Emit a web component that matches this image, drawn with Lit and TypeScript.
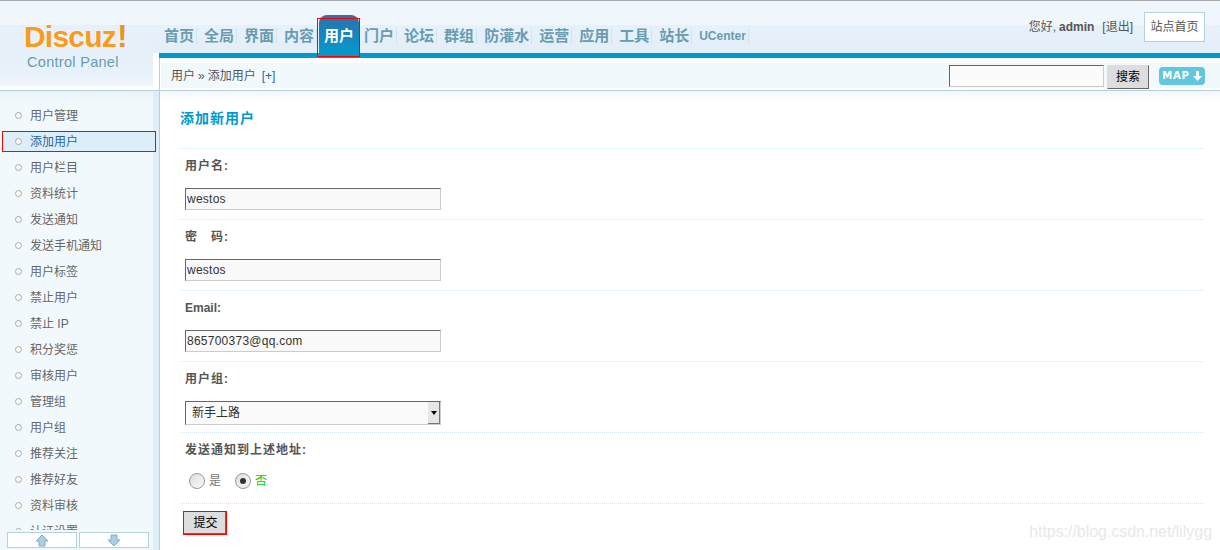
import { LitElement, html, css } from "lit";
import { customElement } from "lit/decorators.js";

const NAV = ["首页","全局","界面","内容","用户","门户","论坛","群组","防灌水","运营","应用","工具","站长","UCenter"];
const MENU = ["用户管理","添加用户","用户栏目","资料统计","发送通知","发送手机通知","用户标签","禁止用户","禁止 IP","积分奖惩","审核用户","管理组","用户组","推荐关注","推荐好友","资料审核","认证设置"];
const FONT = css`"Liberation Sans", "Noto Sans CJK SC", sans-serif`;
const BAND = css`linear-gradient(#f0f6fd 0, #eff6fc 24px, #e7f1fa 24px, #e2eef8 52px)`;

@customElement("app-root")
export class AppRoot extends LitElement {
  static styles = css`
    :host { display: block; width: 1220px; height: 550px; overflow: hidden; position: relative; background: #fff;
      font: 12px/16px ${FONT}; color: #555; }
    * { box-sizing: border-box; }
    .top { height: 91px; border-top: 1px solid #a9a9a9; display: grid; grid-template-columns: 153px 1fr; background: #fff; }
    .logocol { height: 90px; border-bottom: 1px solid #b5d0dc; }
    .logo { height: 85px; padding: 17px 0 0 24px; display: flex; flex-direction: column;
      background: linear-gradient(#f0f6fd 0, #eff6fc 24px, #e6f0f9 24px, #e7f1f9 70px, #eff6fb 85px); }
    .dz { font: bold 30px/36px ${FONT}; letter-spacing: -.8px; color: #fb9a1c; text-shadow: 0 0 2px #fff; }
    .dz b { color: #e5981f; font-size: 32px; letter-spacing: 0; margin-left: 1px; }
    .cp { font: 14.5px/18px ${FONT}; color: #6a9cb0; margin: -2px 0 0 3px; letter-spacing: .3px; }
    .right { display: flex; flex-direction: column; position: relative; }
    .navrow { height: 52px; display: flex; align-items: flex-start; padding-left: 6px; background: ${BAND}; }
    .nav { display: flex; padding-top: 14px; height: 52px; position: relative; z-index: 2; }
    .nav a { height: 38px; padding: 4px 5px 0; display: flex; align-items: center; position: relative;
      font: bold 15px/20px ${FONT}; color: #6a9cb0; }
    .nav a::after { content: ""; position: absolute; right: 2px; top: 13px; height: 16px; width: 1px; background: #d3e3ec; }
    .nav a.active { color: #fff; background: linear-gradient(#2a71ad, #0699cc); border-radius: 8px 8px 0 0; }
    .nav a.active::after { display: none; }
    .nav a.active::before { content: ""; position: absolute; left: -2px; right: -1px; top: 3px; bottom: -4px; border: 1px solid #f00; }
    .nav a.sm { font-size: 12px; }
    .user { margin-left: auto; margin-right: 15px; display: flex; align-items: center; margin-top: 11px; height: 30px; }
    .user b { margin-left: 3px; }
    .user .out { margin-left: 8px; }
    .home { margin-left: 11px; width: 61px; height: 30px; border: 1px solid #b6d0dc; background: #fff; display: flex; align-items: center; justify-content: center; }
    .bar { height: 5px; background: #0099cc; margin-left: 6px; }
    .crumbwrap { background: #fff; padding: 5px 0 2px 1px; height: 33px; margin-left: 6px; border-left: 1px solid #b5d0dc; border-bottom: 1px solid #b5d0dc; position: relative; }
    .crumbwrap::after { content: ""; position: absolute; left: -7px; bottom: -1px; width: 6px; height: 1px; background: #b5d0dc; }
    .crumb { height: 25px; background: #f2f9fd; display: flex; align-items: center; padding: 0 15px 0 10px; }
    .crumb .sep { margin: 0 3px; }
    .crumb .plus { color: #2366a8; margin-left: 6px; }
    .search { margin-left: auto; display: flex; align-items: flex-start; padding-top: 2px; }
    .search input { width: 155px; height: 22px; border: 1px solid; border-color: #666 #ccc #ccc #666; background: #fbfbfb; padding: 0 2px; margin: 0; outline: none; }
    .btn { font: 12px/16px ${FONT}; color: #000; background: #ddd; border: 1px solid; border-color: #ddd #666 #666 #ddd; padding: 0; margin: 0; }
    .search .btn { width: 42px; height: 24px; margin-left: 3px; }
    .map { margin-left: 10px; margin-top: 2px; width: 46px; height: 18px; border-radius: 4px; background: #62c6dc; color: #fff; display: flex; align-items: center; justify-content: center; gap: 3px;
      font: bold 10px/18px "DejaVu Sans", sans-serif; letter-spacing: .8px; }
    .map svg { display: block; }
    .body { height: 459px; display: grid; grid-template-columns: 153px 6px 1fr; }
    .left { position: relative; z-index: 2; display: flex; flex-direction: column; background: #f2f9fd; height: 459px; }
    .fade { height: 12px; flex: none; background: linear-gradient(#eaf3f9, #f2f9fd); }
    .menu { height: 427px; overflow-x: visible; overflow-y: clip; flex: none; }
    .menu a { display: flex; align-items: center; height: 26px; padding-left: 15px; color: #666; position: relative; }
    .menu a i { width: 7px; height: 7px; border-radius: 50%; border: 1px solid #aaa; background: #fafafa; margin: -2px 8px 0 0; flex: none; position: relative; }
    .menu a.on { color: #2366a8; }
    .menu a.on::before { content: ""; box-sizing: border-box; position: absolute; left: 2px; width: 154px; top: 2px; bottom: 3px; background: #deeef9; border: 1px solid #f00; }
    .menu a span { position: relative; }
    .scroll { display: flex; gap: 2px; padding: 2px 0 0 7px; background: #f2f9fd; height: 20px; flex: none; }
    .scroll div { width: 70px; height: 16px; border: 1px solid #b6d0dc; background: #fff; display: flex; align-items: center; justify-content: center; }
    .strip { background: #deeef8; }
    .main { border-left: 1px solid #b5d0dc; padding: 0 17px 0 20px; background: linear-gradient(#f3f8fb 0, #fff 12px, #fff 100%); }
    h1 { margin: 0; height: 57px; padding-top: 18px; font: bold 14px/18px ${FONT}; color: #0099cc; letter-spacing: 1px; }
    .row { height: 71px; border-top: 1px dotted #cfe6f3; padding: 9px 0 0 5px; }
    label { display: block; font-weight: bold; color: #555; height: 16px; line-height: 16px; letter-spacing: 1px; }
    label.latin { letter-spacing: 0; }
    .field { width: 256px; height: 22px; margin: 14px 0 0; display: block; border: 1px solid; border-color: #666 #ccc #ccc #666; background: #f9f9f9;
      font: 12px/20px ${FONT}; letter-spacing: .25px; color: #333; padding: 0 1px; outline: none; }
    .selwrap { position: relative; width: 256px; height: 24px; margin-top: 14px; }
    select { appearance: none; width: 256px; height: 24px; display: block; border: 1px solid; border-color: #666 #ccc #ccc #666; background: #fafafa; padding: 0 6px; margin: 0;
      font: 12px/20px ${FONT}; color: #333; outline: none; border-radius: 0; }
    .arrow { position: absolute; right: 1px; top: 1px; bottom: 1px; width: 12px; background: #e6e6e6; border-right: 1px solid #777; border-bottom: 1px solid #777; display: flex; align-items: center; justify-content: center; }
    .arrow::after { content: ""; border: 3px solid transparent; border-top: 4px solid #000; border-bottom: 0; }
    .radios { display: flex; align-items: center; height: 16px; margin-top: 15px; padding-left: 4px; }
    .radio { width: 16px; height: 16px; border-radius: 50%; border: 1px solid #999; background: linear-gradient(135deg, #dcdcdc, #fafafa); display: flex; align-items: center; justify-content: center; flex: none; }
    .radio.on::after { content: ""; width: 6px; height: 6px; border-radius: 50%; background: #333; }
    .radios span { margin-left: 4px; color: #777; }
    .radios span.no { color: #00d000; }
    .radios span.yes { margin-right: 14px; }
    .actions { border-top: 1px dotted #cfe6f3; padding: 7px 0 0 3px; }
    .submit { display: block; width: 44px; height: 24px; background: #ddd; font: 12px/16px ${FONT}; color: #000; padding: 0 0 0 1px; margin: 0; border: 1px solid #f00; box-shadow: inset -1px -1px 0 #666; }
    .mark { position: absolute; right: 8px; bottom: 8px; font: 15.9px/20px ${FONT}; color: #e8e8e8; }
  `;

  private arrow(up: boolean) {
    return html`<svg width="14" height="13" viewBox="0 0 14 13"><path d="${up ? "M7 1 L13 7 H10 V12 H4 V7 H1 Z" : "M4 1 H10 V6 H13 L7 12 L1 6 H4 Z"}" fill="#a9cfe2" stroke="#85aec6" stroke-width="1"/></svg>`;
  }

  private field(name: string, value: string, latin = false) {
    return html`<div class="row"><label class="${latin ? "latin" : ""}">${name}</label><input class="field" .value=${value} /></div>`;
  }

  render() {
    return html`
      <div class="top">
        <div class="logocol">
          <div class="logo">
            <div class="dz">Discuz<b>!</b></div>
            <div class="cp">Control Panel</div>
          </div>
        </div>
        <div class="right">
          <div class="navrow">
            <nav class="nav">
              ${NAV.map(n => html`<a class="${n === "用户" ? "active" : ""} ${n === "UCenter" ? "sm" : ""}">${n}</a>`)}
            </nav>
            <div class="user">您好,<b>admin</b><span class="out">[退出]</span><div class="home">站点首页</div></div>
          </div>
          <div class="bar"></div>
          <div class="crumbwrap">
            <div class="crumb">用户<span class="sep">»</span>添加用户<span class="plus">[+]</span>
              <div class="search">
                <input /><button class="btn">搜索</button>
                <div class="map">MAP<svg width="9" height="10" viewBox="0 0 9 10"><path d="M3 0h3v5h3L4.500 10 0 5h3z" fill="#fff"/></svg></div>
              </div>
            </div>
          </div>
        </div>
      </div>
      <div class="body">
        <aside class="left">
          <div class="fade"></div>
          <div class="menu">
            ${MENU.map(m => html`<a class="${m === "添加用户" ? "on" : ""}"><i></i><span>${m}</span></a>`)}
          </div>
          <div class="scroll"><div>${this.arrow(true)}</div><div>${this.arrow(false)}</div></div>
        </aside>
        <div class="strip"></div>
        <main class="main">
          <h1>添加新用户</h1>
          ${this.field("用户名:", "westos")}
          ${this.field("密　码:", "westos")}
          ${this.field("Email:", "865700373@qq.com", true)}
          <div class="row"><label>用户组:</label>
            <div class="selwrap"><select><option>新手上路</option></select><div class="arrow"></div></div>
          </div>
          <div class="row"><label>发送通知到上述地址:</label>
            <div class="radios"><div class="radio"></div><span class="yes">是</span><div class="radio on"></div><span class="no">否</span></div>
          </div>
          <div class="actions"><button class="submit">提交</button></div>
        </main>
      </div>
      <div class="mark">https://blog.csdn.net/lilygg</div>
    `;
  }
}
